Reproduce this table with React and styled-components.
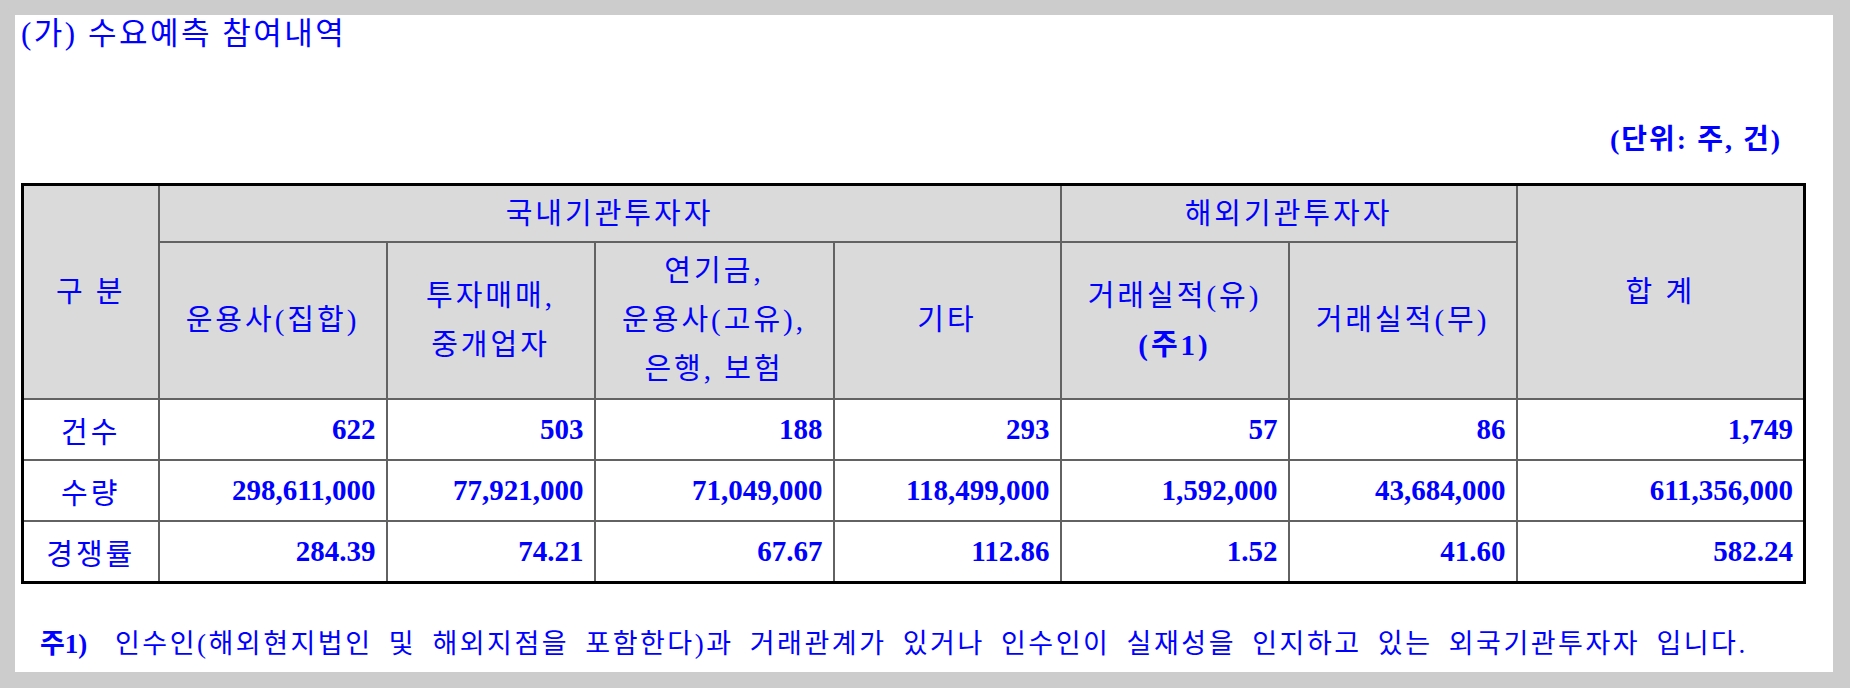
import React from "react";
import styled, { createGlobalStyle } from "styled-components";

const GlobalStyle = createGlobalStyle`
  html, body {
    margin: 0;
    padding: 0;
    background: #cccccc;
  }
  body {
    font-family: "Liberation Serif", "Noto Sans CJK KR", serif;
    color: #0000ff;
  }
`;

const Page = styled.div`
  box-sizing: border-box;
  height: 688px;
  padding: 15px 17px 16px 15px;
`;

const Sheet = styled.div`
  box-sizing: border-box;
  height: 657px;
  background: #ffffff;
  padding: 0 30px 0 6px;
  display: flex;
  flex-direction: column;
`;

const Title = styled.h2`
  margin: 0;
  font-size: 31px;
  font-weight: normal;
  line-height: 38px;
  letter-spacing: 2.5px;
`;

const Unit = styled.div`
  margin-top: 69px;
  padding-right: 21px;
  text-align: right;
  font-size: 28px;
  font-weight: bold;
  line-height: 36px;
  letter-spacing: 2px;
`;

const Table = styled.table`
  margin-top: 25px;
  width: 100%;
  table-layout: fixed;
  border-collapse: collapse;
  border: 3px solid #000;
`;

const HeadCell = styled.th`
  background: #dadada;
  border: 2px solid #626262;
  padding: 0;
  font-size: 29px;
  font-weight: normal;
  letter-spacing: 3px;
  line-height: ${(p) => (p.$tall ? "49px" : "36px")};
  height: ${(p) => (p.$h ? `${p.$h}px` : "auto")};
  text-align: center;
  vertical-align: middle;
`;

const LabelCell = styled.td`
  border: 2px solid #626262;
  height: 59px;
  padding: 0;
  font-size: 29px;
  letter-spacing: 3px;
  text-align: center;
  vertical-align: middle;
`;

const NumCell = styled.td`
  border: 2px solid #626262;
  padding: 0 10px 0 0;
  font-size: 29px;
  font-weight: bold;
  text-align: right;
  vertical-align: middle;
`;

const Note = styled.p`
  margin: 42px 0 0 19px;
  font-size: 27px;
  line-height: 36px;
  letter-spacing: 2.5px;
  word-spacing: 7px;
  white-space: nowrap;
`;

const NoteMark = styled.b`
  display: inline-block;
  width: 75px;
  letter-spacing: 0;
`;

const widths = [136, 228, 208, 239, 227, 228, 228, 288];

const rows = [
  { label: "건수", values: ["622", "503", "188", "293", "57", "86", "1,749"] },
  {
    label: "수량",
    values: [
      "298,611,000",
      "77,921,000",
      "71,049,000",
      "118,499,000",
      "1,592,000",
      "43,684,000",
      "611,356,000",
    ],
  },
  {
    label: "경쟁률",
    values: ["284.39", "74.21", "67.67", "112.86", "1.52", "41.60", "582.24"],
  },
];

export default function App() {
  return (
    <>
      <GlobalStyle />
      <Page>
        <Sheet>
          <Title>(가) 수요예측 참여내역</Title>
          <Unit>(단위: 주, 건)</Unit>
          <Table>
            <colgroup>
              {widths.map((w, i) => (
                <col key={i} style={{ width: w }} />
              ))}
            </colgroup>
            <thead>
              <tr>
                <HeadCell rowSpan={2}>구 분</HeadCell>
                <HeadCell colSpan={4} $h={55}>
                  국내기관투자자
                </HeadCell>
                <HeadCell colSpan={2}>해외기관투자자</HeadCell>
                <HeadCell rowSpan={2}>합 계</HeadCell>
              </tr>
              <tr>
                <HeadCell $tall $h={155}>운용사(집합)</HeadCell>
                <HeadCell $tall>
                  투자매매,
                  <br />
                  중개업자
                </HeadCell>
                <HeadCell $tall>
                  연기금,
                  <br />
                  운용사(고유),
                  <br />
                  은행, 보험
                </HeadCell>
                <HeadCell $tall>기타</HeadCell>
                <HeadCell $tall>
                  거래실적(유)
                  <br />
                  <b>(주1)</b>
                </HeadCell>
                <HeadCell $tall>거래실적(무)</HeadCell>
              </tr>
            </thead>
            <tbody>
              {rows.map((r) => (
                <tr key={r.label}>
                  <LabelCell>{r.label}</LabelCell>
                  {r.values.map((v, i) => (
                    <NumCell key={i}>{v}</NumCell>
                  ))}
                </tr>
              ))}
            </tbody>
          </Table>
          <Note>
            <NoteMark>주1)</NoteMark>
            인수인(해외현지법인 및 해외지점을 포함한다)과 거래관계가 있거나 인수인이 실재성을 인지하고 있는 외국기관투자자 입니다.
          </Note>
        </Sheet>
      </Page>
    </>
  );
}
